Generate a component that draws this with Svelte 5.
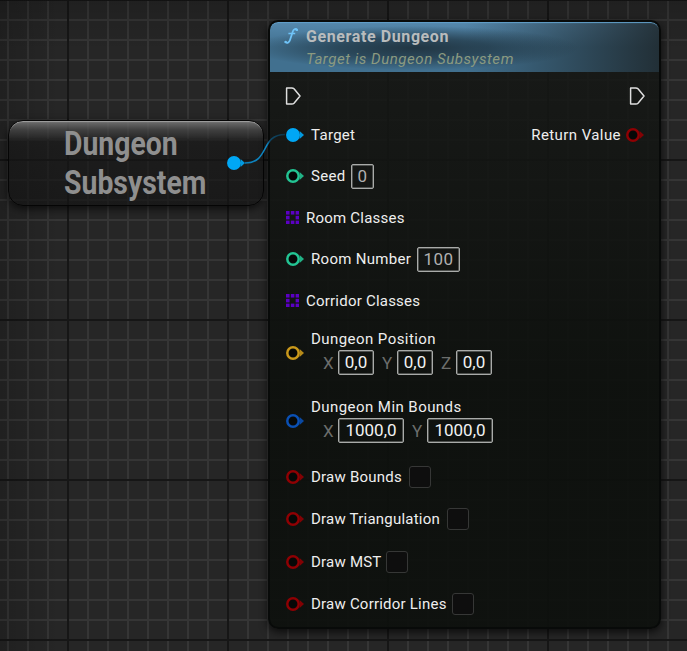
<script>
  const simpleTop = [
    { label: 'Seed', color: '#23c493', value: '0', w: 23, tall: true, lw: 34 },
    { label: 'Room Classes', array: true, lw: 99 },
    { label: 'Room Number', color: '#23c493', value: '100', w: 43, tall: true, lw: 100 },
    { label: 'Corridor Classes', array: true, lw: 114 }
  ];
  const vectors = [
    { label: 'Dungeon Position', color: '#c9981b', w: 36, axes: [['X', '0,0'], ['Y', '0,0'], ['Z', '0,0']] },
    { label: 'Dungeon Min Bounds', color: '#0a50b4', w: 66, axes: [['X', '1000,0'], ['Y', '1000,0']] }
  ];
  const flags = [
    { label: 'Draw Bounds', lw: 92 },
    { label: 'Draw Triangulation', lw: 130 },
    { label: 'Draw MST', lw: 69 },
    { label: 'Draw Corridor Lines', lw: 135 }
  ];
  const cells = [[0, 0], [5, 0], [10, 0], [0, 5], [10, 5], [0, 10], [5, 10], [10, 10]];
</script>

{#snippet pin(color, filled)}
  <svg class="pin" width="19" height="16" viewBox="0 0 19 16">
    <path d="M13.6 4 L18 8 L13.6 12Z" fill={color} opacity="0.9" />
    <circle cx="7" cy="8" r="5.7" fill={filled ? color : '#060807'} stroke={color} stroke-width="2.5" />
  </svg>
{/snippet}

{#snippet exec()}
  <svg class="exec" width="16" height="20" viewBox="0 0 16 20">
    <path d="M1.6 1.9 H6.8 Q8.2 1.9 9 2.7 L15 10 L9 17.3 Q8.2 18.1 6.8 18.1 H1.6Z" fill="#151715" stroke="#dedede" stroke-width="1.5" stroke-linejoin="round" />
  </svg>
{/snippet}

<main class="canvas">
  <section class="variable">
    <h1><span>Dungeon</span><span>Subsystem</span></h1>
    {@render pin('#00a7f5', true)}
  </section>

  <section class="node">
    <header>
      <svg class="fn" width="16" height="18" viewBox="0 0 16 18">
        <path d="M13.2 3.1 C11.8 1.4 9.8 1.6 8.9 4.3 L6 13 C5.2 15.7 3 16.6 1.4 15" fill="none" stroke="#6fc3f7" stroke-width="1.8" stroke-linecap="round" />
        <path d="M4.4 6.5 H11.2" stroke="#6fc3f7" stroke-width="1.5" />
        <circle cx="12.6" cy="2.7" r="1.2" fill="#6fc3f7" /><circle cx="1.7" cy="14.9" r="1.2" fill="#6fc3f7" />
      </svg>
      <div class="titles">
        <h2>Generate Dungeon</h2>
        <p>Target is Dungeon Subsystem</p>
      </div>
    </header>
    <div class="row first">{@render exec()}{@render exec()}</div>
    <div class="row target">
      <div class="item">{@render pin('#00a7f5', true)}<span class="label">Target</span></div>
      <div class="item out"><span class="label">Return Value</span>{@render pin('#8f0003', false)}</div>
    </div>
    {#each simpleTop as r}
      <div class="row" class:tall={r.tall}>
        <div class="item">
          {#if r.array}
            <svg class="array" width="13" height="13" viewBox="0 0 13.5 13.5">
              {#each cells as c}<rect x={c[0]} y={c[1]} width="3.7" height="3.7" fill="#5b00c4" />{/each}
            </svg>
          {:else}
            {@render pin(r.color, false)}
          {/if}
          <span class="label" class:narrow={r.array} style="width:{r.lw}px">{r.label}</span>
          {#if r.value}<span class="box muted" style="width:{r.w}px">{r.value}</span>{/if}
        </div>
      </div>
    {/each}
    {#each vectors as v}
      <div class="vector">
        {@render pin(v.color, false)}
        <div class="fields">
          <span class="label wide">{v.label}</span>
          <div class="axes">
            {#each v.axes as a}
              <span class="axis">{a[0]}</span><span class="box" style="width:{v.w}px">{a[1]}</span>
            {/each}
          </div>
        </div>
      </div>
    {/each}
    <div class="flags">
      {#each flags as f}
        <div class="item flag">
          {@render pin('#8f0003', false)}
          <span class="label narrow" style="width:{f.lw}px">{f.label}</span>
          <span class="check"></span>
        </div>
      {/each}
    </div>
  </section>

  <svg class="wire" width="60" height="40" viewBox="0 0 60 40">
    <defs>
      <linearGradient id="wireFade" gradientUnits="userSpaceOnUse" x1="0" y1="0" x2="50" y2="0">
        <stop offset="0" stop-color="#0d7cb5" />
        <stop offset="0.54" stop-color="#0d86c4" />
        <stop offset="0.6" stop-color="#0e4766" />
        <stop offset="1" stop-color="#10303f" />
      </linearGradient>
    </defs>
    <path d="M5 33 C30 33 20 4.5 45 4.5" fill="none" stroke="url(#wireFade)" stroke-width="1.6" />
  </svg>
</main>

<style>
  .canvas {
    position: relative;
    width: 687px;
    height: 651px;
    overflow: hidden;
    font-family: Roboto, 'Liberation Sans', sans-serif;
    background:
      linear-gradient(90deg, rgba(0, 0, 0, 0.16), transparent 60px),
      linear-gradient(rgba(0, 0, 0, 0.16), transparent 50px),
      linear-gradient(90deg, #161616 2px, transparent 2px) 67px 0 / 160px 160px,
      linear-gradient(#161616 2px, transparent 2px) 0 159px / 160px 160px,
      linear-gradient(90deg, #353535 2px, transparent 2px) 7px 0 / 20px 20px,
      linear-gradient(#353535 2px, transparent 2px) 0 19px / 20px 20px,
      #262626;
  }
  svg { display: block; flex: none; }
  h1, h2, p { margin: 0; }
  .wire { position: absolute; left: 240px; top: 130px; }
  .variable {
    position: absolute;
    left: 8px;
    top: 120px;
    width: 256px;
    height: 86px;
    box-sizing: border-box;
    display: flex;
    align-items: center;
    justify-content: space-between;
    padding: 0 18px 1px 55px;
    border: 1px solid #050505;
    border-radius: 15px;
    background: linear-gradient(rgba(125, 125, 125, 0.85), rgba(72, 72, 72, 0.75) 9px, rgba(42, 42, 42, 0.65) 17px, rgba(24, 24, 24, 0.65) 19px, rgba(22, 22, 22, 0.65) 30px, rgba(20, 20, 20, 0.7));
    box-shadow: inset 0 2px 1px -1px #a0a0a0, 0 3px 8px rgba(0, 0, 0, 0.65);
  }
  .variable .pin { margin-right: -1px; }
  h1 {
    display: flex;
    flex-direction: column;
    width: 150px;
    font-size: 34px;
    line-height: 39px;
    font-weight: 700;
    color: #8f8f8f;
    transform: scaleX(0.835);
    transform-origin: left;
  }
  .node {
    position: absolute;
    left: 268px;
    top: 20px;
    width: 393px;
    height: 609px;
    box-sizing: border-box;
    border: 2px solid #080a09;
    border-radius: 10px;
    overflow: hidden;
    background: linear-gradient(rgba(22, 24, 22, 0.86), rgba(13, 16, 13, 0.93) 60%);
    box-shadow: 0 3px 9px rgba(0, 0, 0, 0.7);
  }
  header {
    display: flex;
    height: 50px;
    box-sizing: border-box;
    padding: 5px 0 0 14px;
    gap: 6px;
    border-radius: 8px 8px 0 0;
    box-shadow: inset 0 2px 1px -1px #62a0ca;
    background:
      radial-gradient(ellipse 165px 22px at 37% 52%, rgba(28, 44, 54, 0.85), rgba(28, 46, 57, 0.62) 45%, transparent),
      linear-gradient(90deg, transparent 50%, rgba(27, 33, 35, 0.82)),
      linear-gradient(#5588ac, #41708f 50%, #41708f);
  }
  .titles { display: flex; flex-direction: column; }
  h2 { font-size: 16px; line-height: 20px; font-weight: 700; letter-spacing: 0.6px; color: #b9bcbd; }
  p { margin-top: 2px; font-size: 15px; line-height: 20px; font-style: italic; letter-spacing: 0.55px; color: #8b9a80; white-space: nowrap; }
  .row {
    display: flex;
    align-items: center;
    justify-content: space-between;
    height: 29px;
    padding: 0 15px;
  }
  .row.first { height: 48px; }
  .row.tall { height: 54px; }
  .item { display: flex; align-items: center; }
  .pin { margin-right: 6px; }
  .row .item .pin, .vector .pin, .flag .pin { margin-left: 1px; }
  .out { gap: 4px; }
  .row .out .pin { margin: 0 -1px 0 1px; }
  .row.first { padding-right: 14px; }
  .row.target { padding-right: 15px; }
  .array { margin: 0 7px 0 1px; }
  .label { font-size: 15px; line-height: 18px; letter-spacing: 0.3px; color: #eeeeee; white-space: nowrap; }
  .out .label { letter-spacing: 0.42px; }
  .label.narrow { letter-spacing: 0.22px; }
  .label.wide { letter-spacing: 0.44px; }
  .box {
    flex: none;
    box-sizing: border-box;
    height: 25px;
    border: 1px solid #a9aba9;
    box-shadow: inset 0 0 0 0.5px #8a8c8a;
    border-radius: 2px;
    font-size: 17px;
    line-height: 23px;
    text-align: center;
    color: #f2f2f2;
    white-space: nowrap;
  }
  .item .box { margin-left: 6px; }
  .box.muted { color: #b0b0b0; letter-spacing: 0.4px; line-height: 22px; }
  .vector { display: flex; align-items: center; height: 46px; margin-top: 15px; padding-left: 15px; }
  .vector + .vector { margin-top: 22px; }
  .fields { display: flex; flex-direction: column; gap: 2px; height: 46px; }
  .axes { display: flex; padding-left: 12px; }
  .axis { width: 15px; font-size: 17px; line-height: 26px; color: #6c6e6c; }
  .box + .axis { margin-left: 8px; }
  .flags { margin-top: 12px; }
  .flag { height: 42.33px; padding-left: 15px; }
  .check { width: 22px; height: 22px; margin-left: 6px; box-sizing: border-box; border: 1px solid #363736; border-radius: 3px; background: #0e0e0e; }
</style>
